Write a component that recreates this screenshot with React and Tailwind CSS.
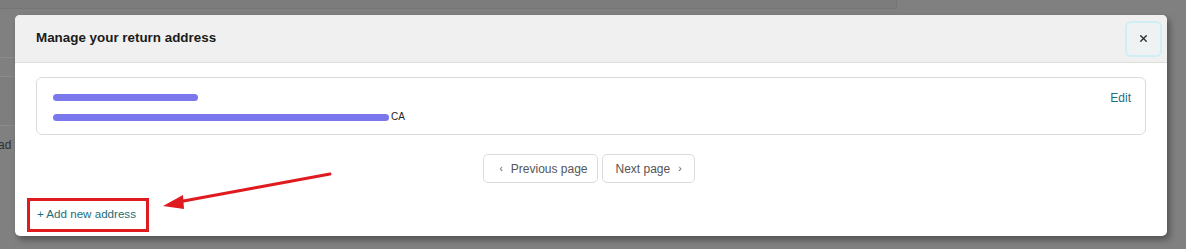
import { X } from 'lucide-react'

export default function App() {
  return (
    <div className="relative h-[249px] w-[1186px] overflow-hidden bg-[#7f807f] font-['Liberation_Sans',Arial,sans-serif]">
      {/* page behind the overlay */}
      <div className="h-[9px] w-[897px] border-b border-r border-[#747574] bg-[#7b7c7b]"></div>
      <div className="mt-[48px] w-[15px] border-t border-[#8a8b8a]"></div>
      <div className="mt-[18px] h-[50px] w-[15px] border-t border-b border-[#8a8b8a] bg-[#7d7e7d]"></div>
      <div className="mt-[12px] whitespace-nowrap text-[12px] leading-[14px] text-[#2f302f] -ml-[2px]">ad t</div>

      {/* modal */}
      <div className="absolute left-[15px] top-[15px] flex h-[221px] w-[1152px] flex-col overflow-hidden rounded-[5px] bg-white shadow-[3px_4px_6px_rgba(0,0,0,0.35)]">
        <div className="flex h-[48px] shrink-0 items-center justify-between border-b border-[#dcdedc] bg-[#eff0ef] pl-[21px] pr-[5px]">
          <h2 className="text-[13.4px] font-bold text-[#1b1b1b]">Manage your return address</h2>
          <button className="flex h-[36px] w-[37px] items-center justify-center rounded-[6px] border-2 border-[#cfeef5] bg-[#eef2f2] text-[#333]">
            <X size={11} strokeWidth={3} />
          </button>
        </div>

        <div className="flex flex-1 flex-col px-[21px] pt-[14px]">
          <div className="flex h-[58px] justify-between rounded-[6px] border border-[#d9dad9] pl-[16px] pr-[14px] pt-[13px]">
            <div className="flex flex-col gap-[11px] pt-[3px]">
              <span className="block h-[7px] w-[145px] rounded-full bg-[#7b78ee]"></span>
              <div className="flex items-center text-[10px] leading-[10px] text-[#222]">
                <span className="block h-[7px] w-[336px] rounded-full bg-[#7b78ee]"></span>
                <span className="ml-[2px]">CA</span>
              </div>
            </div>
            <a className="text-[12px] leading-[14px] text-[#1e6f86]">Edit</a>
          </div>

          <div className="mt-[19px] flex justify-center gap-[4px] pr-[4px]">
            <button className="flex h-[29px] w-[115px] items-center justify-center gap-[8px] rounded-[5px] border border-[#dadbda] pl-[6px] text-[12px] text-[#555]">
              <span className="text-[10px]">‹</span>
              Previous page
            </button>
            <button className="flex h-[29px] w-[93px] items-center justify-center gap-[8px] rounded-[5px] border border-[#dadbda] text-[12px] text-[#555]">
              Next page
              <span className="text-[10px]">›</span>
            </button>
          </div>

          <div className="mt-[18px] pl-[1px]">
            <span className="relative inline-block text-[11.6px] leading-[14px] text-[#1d6e78]">
              + Add new address
              <span className="absolute -left-[10px] -right-[13px] -top-[9px] -bottom-[11px] border-[3px] border-[#e01b1f]"></span>
            </span>
          </div>
        </div>
      </div>

      {/* annotation arrow */}
      <svg className="absolute left-0 top-0" width="1186" height="249" viewBox="0 0 1186 249">
        <line x1="330" y1="174" x2="178" y2="202" stroke="#e01b1f" strokeWidth="3" strokeLinecap="round" />
        <polygon points="163,206 183,195 184,209" fill="#e01b1f" />
      </svg>
    </div>
  )
}
